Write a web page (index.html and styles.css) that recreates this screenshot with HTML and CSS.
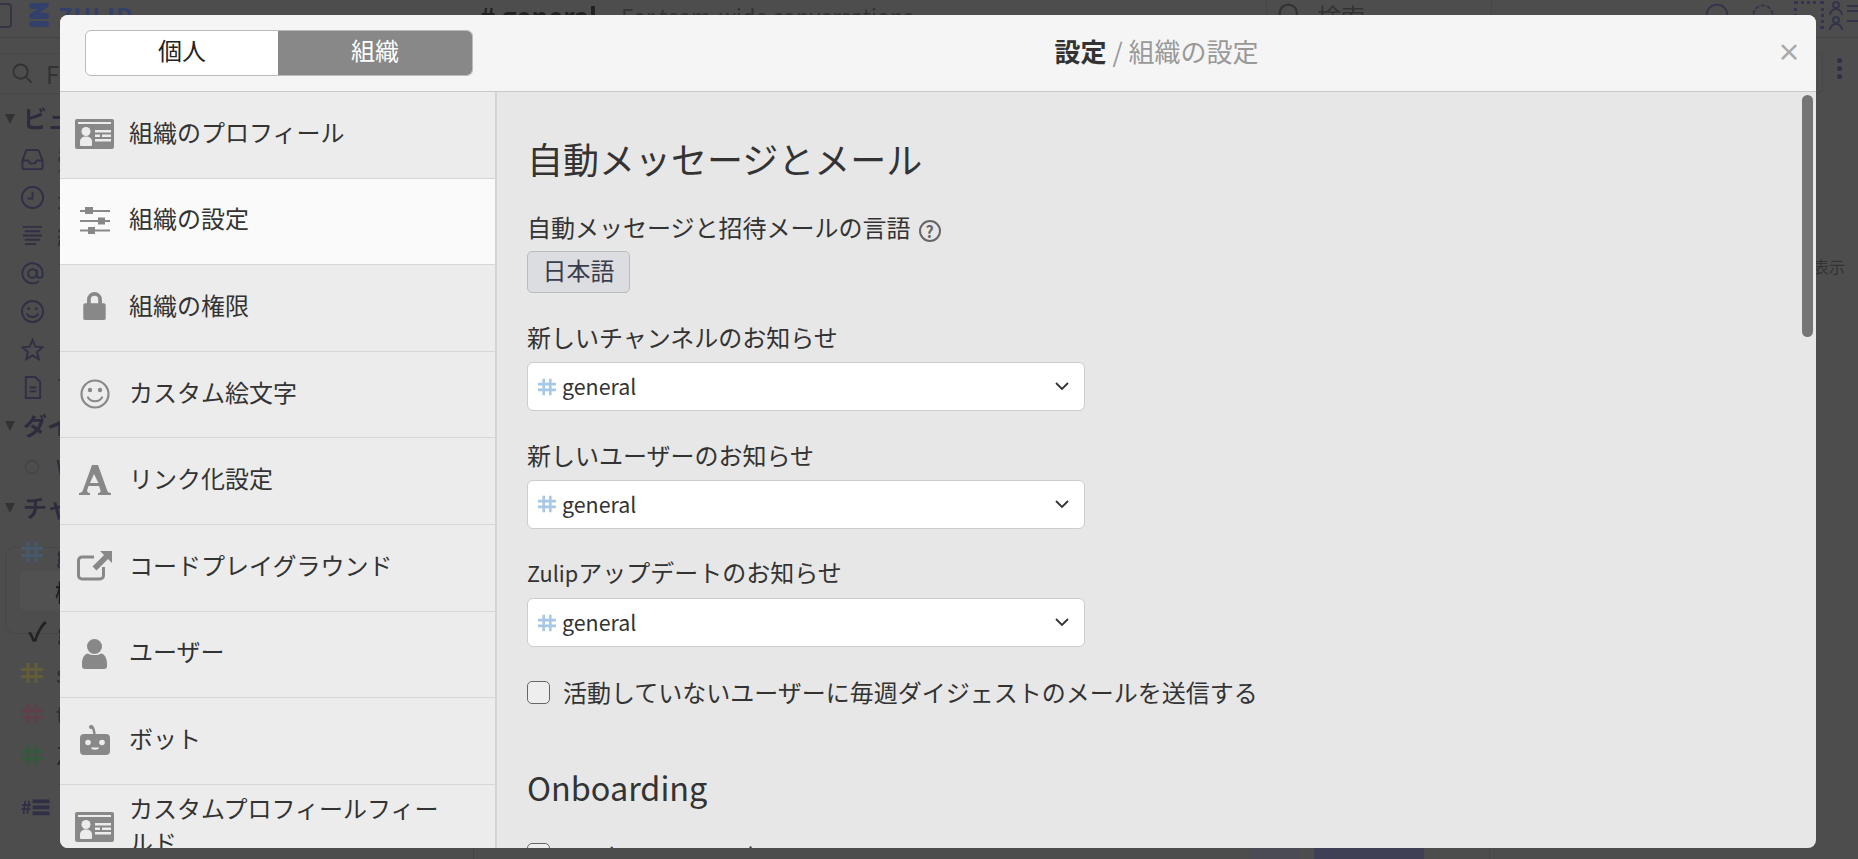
FILE: index.html
```html
<!DOCTYPE html>
<html lang="ja">
<head>
<meta charset="utf-8">
<title>設定 / 組織の設定</title>
<link rel="stylesheet" href="styles.css">
</head>
<body>
<svg class="defs" width="0" height="0" aria-hidden="true">
  <symbol id="i-card" viewBox="0 0 39 30">
    <path fill="#888" d="M2 0h35a2 2 0 0 1 2 2v26a2 2 0 0 1-2 2H2a2 2 0 0 1-2-2V2a2 2 0 0 1 2-2z"/>
    <path fill="#ececec" d="M3 3h33v2H3zM20 11h16v2.500H20zM27 15.500h9V18h-9zM20 15.500h5V18h-5zM20 20h16v2.500H20z"/>
    <circle fill="#ececec" cx="11" cy="12.500" r="4.500"/>
    <path fill="#ececec" d="M5 26v-3.500c0-3 2.500-5 6-5s6 2 6 5V26a1 1 0 0 1-1 1H6a1 1 0 0 1-1-1z"/>
  </symbol>
  <symbol id="i-hash" viewBox="0 0 22 22">
    <path fill="none" stroke="currentColor" stroke-width="3.200" d="M7 1v20M15 1v20M0 7.500h22M0 14.500h22"/>
  </symbol>
</svg>

<div class="app">
  <header class="nav">
    <div class="nav-left">
      <span class="collapse-box"></span>
      <svg class="zlogo" viewBox="0 0 20 24"><path fill="#33406b" d="M3 0h15a2 2 0 0 1 1.500 3.300L11 10h6a3 3 0 0 1 0 6H3a3 3 0 0 1-1.500-5.400L9 6H3a3 3 0 0 1 0-6zM3 18h14a3 3 0 0 1 0 6H3a3 3 0 0 1 0-6z"/></svg>
      <span class="zword">ZULIP</span>
    </div>
    <div class="nav-mid">
      <b class="nav-chan"># general</b>
      <span class="nav-desc">For team-wide conversations</span>
    </div>
    <div class="nav-search">
      <svg class="nav-ico" viewBox="0 0 30 30"><circle cx="13" cy="13" r="10" fill="none" stroke="#333" stroke-width="2.500"/></svg>
      <span>検索</span>
    </div>
    <div class="nav-right">
      <svg class="nav-ico" viewBox="0 0 30 30"><circle cx="15" cy="15" r="12" fill="none" stroke="#33334a" stroke-width="2"/></svg>
      <svg class="nav-ico" viewBox="0 0 30 30"><circle cx="15" cy="15" r="11" fill="none" stroke="#33334a" stroke-width="2" stroke-dasharray="5 2"/></svg>
      <span class="avatar"></span>
      <svg class="nav-ico users" viewBox="0 0 30 30"><g fill="none" stroke="#33334a" stroke-width="2"><circle cx="7" cy="5" r="3"/><circle cx="7" cy="20" r="3"/><path d="M1 15a6 6 0 0 1 12 0M1 30a6 6 0 0 1 12 0M18 6h12M18 11h12M18 21h12"/></g></svg>
    </div>
  </header>

  <div class="below">
    <aside class="left">
      <div class="filter">
        <svg class="filter-ico" viewBox="0 0 22 22"><g fill="none" stroke="#333" stroke-width="2"><circle cx="9" cy="9" r="7.500"/><path d="M14.500 14.500L20.500 20.500"/></g></svg>
        <span>Filter</span>
      </div>
      <div class="head"><span class="tri"></span>ビュー</div>
      <div class="li"><svg class="li-ico" viewBox="0 0 24 24"><path fill="none" stroke="#2f2f45" stroke-width="2" d="M1.500 13v7a2 2 0 0 0 2 2h17a2 2 0 0 0 2-2v-7l-4-10a2 2 0 0 0-2-1H7a2 2 0 0 0-1.800 1zM1.500 13h6l2 3h5l2-3h6"/></svg>受信箱</div>
      <div class="li"><svg class="li-ico" viewBox="0 0 24 24"><path fill="none" stroke="#2f2f45" stroke-width="2" d="M12 1a11 11 0 1 0 .01 0zM12 6v7H7"/></svg>最近の会話</div>
      <div class="li"><svg class="li-ico" viewBox="0 0 24 24"><path fill="none" stroke="#2f2f45" stroke-width="2" d="M2 3h20M4 7.500h16M2 12h20M4 16.500h16M4 21h12"/></svg>結合フィード</div>
      <div class="li"><svg class="li-ico" viewBox="0 0 24 24"><g fill="none" stroke="#2f2f45" stroke-width="2"><circle cx="12" cy="12" r="4.500"/><path d="M16.500 8v5.500a3 3 0 0 0 6 0V12a10.500 10.500 0 1 0-4 8"/></g></svg>メンション</div>
      <div class="li"><svg class="li-ico" viewBox="0 0 24 24"><g fill="none" stroke="#2f2f45" stroke-width="2"><circle cx="12" cy="12" r="11"/><path d="M6 14c2 5 10 5 12 0"/></g><circle cx="8" cy="9" r="1.500" fill="#2f2f45"/><circle cx="16" cy="9" r="1.500" fill="#2f2f45"/></svg>リアクション</div>
      <div class="li"><svg class="li-ico" viewBox="0 0 24 24"><path fill="none" stroke="#2f2f45" stroke-width="2" d="M12 2l3 7 7.500.7-5.700 5 1.700 7.300-6.500-3.900L5.500 22l1.700-7.300-5.700-5L9 9z"/></svg>スター付き</div>
      <div class="li"><svg class="li-ico" viewBox="0 0 24 24"><path fill="none" stroke="#2f2f45" stroke-width="2" d="M5 1h10l5 5v17H5zM9 12h7M9 16h7"/></svg>下書き</div>
      <div class="head head-dm"><span class="tri"></span>ダイレクト</div>
      <div class="li"><span class="ring"></span>Welcome Bot</div>
      <div class="head head-ch"><span class="tri"></span>チャンネル</div>
      <div class="li li-first"><svg class="hash h-blue"><use href="#i-hash"/></svg>general</div>
      <div class="thread">
        <div class="topic">桁</div>
        <div class="li li-check"><span class="check">✓</span>greetings</div>
      </div>
      <div class="li li-tall li-after"><svg class="hash h-yellow"><use href="#i-hash"/></svg>sandbox</div>
      <div class="li li-tall"><svg class="hash h-red"><use href="#i-hash"/></svg>test</div>
      <div class="li li-tall"><svg class="hash h-green"><use href="#i-hash"/></svg>Zulip</div>
      <div class="li li-all"><span class="allch">#☰</span>はチャンネル</div>
    </aside>
    <main class="center">
      <div class="btm-bar">
        <span class="btm-a"></span>
        <span class="btm-b"></span>
      </div>
    </main>
    <aside class="right">
      <div class="right-box"><span class="dots"><i></i><i></i><i></i></span></div>
      <div class="show">表示</div>
    </aside>
  </div>
</div>

<div class="modal">
  <div class="modal-head">
    <div class="head-side">
      <div class="toggle">
        <span class="tog-item">個人</span>
        <span class="tog-item tog-on">組織</span>
      </div>
    </div>
    <div class="modal-title"><b>設定</b> <span class="crumb">/ 組織の設定</span></div>
    <span class="close">×</span>
  </div>
  <div class="modal-body">
    <nav class="side">
      <div class="row"><svg class="ico"><use href="#i-card"/></svg><span>組織のプロフィール</span></div>
      <div class="row row-on"><svg class="ico ico-s" viewBox="0 0 30 28"><path fill="#888" d="M0 3h30v2H0zM0 13h30v2H0zM0 22.500h30v2H0z"/><path fill="#888" d="M5 0h8v7H5zM18 10.500h7v7h-7zM8 20h7v7H8z"/></svg><span>組織の設定</span></div>
      <div class="row"><svg class="ico ico-lock" viewBox="0 0 24 30"><path fill="none" stroke="#888" stroke-width="4" d="M6 14V8a6 6 0 0 1 12 0v6"/><rect y="12" width="24" height="18" rx="2" fill="#888"/></svg><span>組織の権限</span></div>
      <div class="row"><svg class="ico ico-s" viewBox="0 0 30 30"><g fill="none" stroke="#888" stroke-width="2.200"><circle cx="15" cy="15" r="13.500"/><path d="M8 18.500c3 5 11 5 14 0" stroke-linecap="round"/></g><circle cx="10" cy="11" r="2.200" fill="#888"/><circle cx="20" cy="11" r="2.200" fill="#888"/></svg><span>カスタム絵文字</span></div>
      <div class="row"><svg class="ico ico-s ico-a" viewBox="0 0 32 30"><path fill="#888" d="M13 0h6l9 25c.5 2 1.500 2.800 4 3v2H19v-2c2 0 3-1 2.500-2.500L20 21H9.500l-1.300 4c-.5 1.500.5 2.800 2.800 3v2H0v-2c2.500-.3 3.500-1.300 4-3zM15 9l-4 9h8.500z"/></svg><span>リンク化設定</span></div>
      <div class="row"><svg class="ico ico-x" viewBox="0 0 35 30"><path fill="none" stroke="#888" stroke-width="3" d="M17 6H5a3.500 3.500 0 0 0-3.500 3.500v15A3.500 3.500 0 0 0 5 28h18a3.500 3.500 0 0 0 3.500-3.500V16"/><path fill="#888" d="M23 0h12v12l-4-4-11.500 11.500-4-4L27 4z"/></svg><span>コードプレイグラウンド</span></div>
      <div class="row"><svg class="ico ico-u" viewBox="0 0 25 30"><circle cx="12.500" cy="7.500" r="7.500" fill="#888"/><path fill="#888" d="M0 25c0-7 3-10 6-10.500 3 2 10 2 13 0 3 .5 6 3.500 6 10.500v2a3 3 0 0 1-3 3H3a3 3 0 0 1-3-3z"/></svg><span>ユーザー</span></div>
      <div class="row"><svg class="ico ico-s" viewBox="0 0 30 30"><path fill="none" stroke="#888" stroke-width="2.500" d="M10.500 1c2.500 0 3.500 4 4 8"/><circle cx="11" cy="2" r="2" fill="#888"/><rect y="9" width="30" height="21" rx="4" fill="#888"/><circle cx="8" cy="17.500" r="2.800" fill="#ececec"/><circle cx="22" cy="17.500" r="2.800" fill="#ececec"/><path fill="#ececec" d="M11 22.500h8c0 3-8 3-8 0z"/></svg><span>ボット</span></div>
      <div class="row row-wrap"><svg class="ico"><use href="#i-card"/></svg><span class="wrap">カスタムプロフィールフィールド</span></div>
    </nav>
    <section class="content">
      <span class="thumb"></span>
      <h3 class="h">自動メッセージとメール</h3>
      <label class="lab lab-first">自動メッセージと招待メールの言語<span class="help">?</span></label>
      <button class="lang">日本語</button>
      <label class="lab lab-second">新しいチャンネルのお知らせ</label>
      <div class="sel"><svg class="hash-s"><use href="#i-hash"/></svg><span class="sel-t">general</span><svg class="chev" viewBox="0 0 14 9"><path fill="none" stroke="#333" stroke-width="1.800" d="M1 1l6 6 6-6"/></svg></div>
      <label class="lab">新しいユーザーのお知らせ</label>
      <div class="sel"><svg class="hash-s"><use href="#i-hash"/></svg><span class="sel-t">general</span><svg class="chev" viewBox="0 0 14 9"><path fill="none" stroke="#333" stroke-width="1.800" d="M1 1l6 6 6-6"/></svg></div>
      <label class="lab"><span class="lat">Zulip</span>アップデートのお知らせ</label>
      <div class="sel"><svg class="hash-s"><use href="#i-hash"/></svg><span class="sel-t">general</span><svg class="chev" viewBox="0 0 14 9"><path fill="none" stroke="#333" stroke-width="1.800" d="M1 1l6 6 6-6"/></svg></div>
      <div class="chk chk-first"><span class="box"></span>活動していないユーザーに毎週ダイジェストのメールを送信する</div>
      <h3 class="h h-second">Onboarding</h3>
      <div class="chk chk-second"><span class="box"></span><span class="lat">Send a custom Welcome Bot message to new users</span></div>
    </section>
  </div>
</div>
</body>
</html>
```

FILE: styles.css
```css
* { box-sizing: border-box; }
html, body { margin: 0; height: 100%; overflow: hidden; }
body {
  background: #4d4d4d;
  font-family: "Noto Sans CJK JP", "Noto Sans", sans-serif;
  font-size: 24px;
  color: #333;
}
.defs { display: block; height: 0; }

/* dimmed application behind the modal */
.app {
  height: 859px;
  width: 1858px;
  display: flex;
  flex-direction: column;
  color: #2a2a3a;
  filter: blur(0.6px);
  overflow: hidden;
}
.nav {
  height: 38px;
  flex: none;
  display: flex;
  align-items: center;
  padding-bottom: 7px;
  border-bottom: 1px solid #444;
}
.nav-left { width: 474px; display: flex; align-items: center; flex: none; }
.collapse-box { width: 30px; height: 25px; margin-left: -18px; border: 2px solid #3a3346; border-radius: 4px; flex: none; }
.zlogo { width: 20px; height: 24px; margin-left: 17px; flex: none; }
.zword { margin-left: 9px; font-weight: 700; color: #33406b; letter-spacing: 1px; }
.nav-mid { width: 793px; flex: none; display: flex; align-items: center; gap: 24px; padding-left: 6px; border-right: 1px solid #474747; height: 37px; }
.nav-chan { font-size: 26px; color: #222; }
.nav-desc { color: #333; font-size: 21.7px; }
.nav-search { width: 225px; flex: none; display: flex; align-items: center; gap: 14px; padding-left: 10px; border-right: 1px solid #474747; height: 37px; color: #333; }
.nav-ico { width: 26px; height: 26px; flex: none; }
.nav-right { display: flex; align-items: center; gap: 20px; padding-left: 212px; flex: none; }
.avatar { width: 30px; height: 28px; border: 3px dotted #33334f; flex: none; margin-left: -2px; }
.users { width: 30px; height: 30px; margin-left: -15px; }

.below { flex: 1; display: flex; min-height: 0; }
.left { width: 474px; flex: none; border-right: 1px solid #444; padding-top: 15px; }
.filter {
  height: 41px;
  margin: 0 40px 5px -6px;
  border: 1px solid #474747;
  border-radius: 6px;
  display: flex;
  align-items: center;
  gap: 13px;
  padding-left: 17px;
  color: #333;
}
.filter-ico { width: 21px; height: 21px; flex: none; }
.head { height: 40px; margin-bottom: 1px; padding: 0 0 4px 5px; display: flex; align-items: center; font-weight: 700; color: #2c2c3c; }
.head-dm { margin-bottom: 2px; }
.head-ch { margin-top: 2px; }
.tri { width: 0; height: 0; border-left: 5px solid transparent; border-right: 5px solid transparent; border-top: 10px solid #333; margin: 4px 8px 0 0; flex: none; }
.li { height: 38px; display: flex; align-items: center; padding-left: 21px; gap: 13px; color: #2c2c3c; white-space: nowrap; }
.li-ico { width: 23px; height: 23px; flex: none; }
.ring { width: 14px; height: 14px; margin: 0 4px; border: 1px solid #3e3e3e; border-radius: 50%; flex: none; }
.hash { width: 22px; height: 22px; flex: none; }
.h-blue { color: #47586a; }
.h-yellow { color: #625c3b; }
.h-red { color: #5e4049; }
.h-green { color: #36583f; }
.li-first { margin-top: 5px; }
.thread { border: 1px solid #474747; border-right: 0; border-radius: 10px 0 0 10px; margin-left: 5px; height: 87px; margin-top: -24px; padding-top: 23px; }
.topic { margin-left: 14px; height: 40px; background: #515151; border-radius: 6px; padding-left: 35px; display: flex; align-items: center; color: #1c1c1c; font-weight: 500; }
.li-check { padding-left: 22px; gap: 9px; height: 36px; }
.check { font-size: 26px; color: #222; width: 20px; font-weight: 700; }
.li-tall { height: 41px; }
.li-after { margin-top: 18px; }
.li-all { margin-top: 11px; height: 40px; gap: 10px; }
.allch { font-weight: 700; font-size: 18px; color: #2f2f45; }
.center { flex: 1; display: flex; align-items: flex-end; border-right: 1px solid #474747; }
.btm-bar { height: 11px; width: 100%; display: flex; }
.btm-a { width: 50px; margin-left: 775px; background: #4b4b55; }
.btm-b { width: 110px; margin-left: 15px; background: #3f3f55; }
.right { width: 368px; flex: none; padding-top: 15px; display: flex; flex-direction: column; }
.right-box { height: 41px; margin-left: -40px; width: 373px; border: 1px solid #474747; border-left: 0; border-radius: 6px; position: relative; }
.dots { position: absolute; right: -20px; top: 4px; display: flex; flex-direction: column; gap: 3px; }
.dots i { width: 5px; height: 5px; border-radius: 50%; background: #2f2f45; display: block; }
.show { margin-top: 160px; width: 355px; text-align: right; white-space: nowrap; font-size: 16px; line-height: 24px; color: #333; }

/* modal */
.modal {
  position: absolute;
  left: 60px;
  top: 15px;
  width: 1756px;
  height: 833px;
  border-radius: 8px;
  overflow: hidden;
  display: flex;
  flex-direction: column;
  background: #e7e7e7;
}
.modal-head {
  height: 77px;
  flex: none;
  display: flex;
  align-items: center;
  background: #f5f5f5;
  border-bottom: 1px solid #c8c8c8;
  position: relative;
}
.head-side { width: 437px; flex: none; padding-left: 25px; }
.toggle { display: flex; width: 388px; height: 46px; border: 1px solid #bbb; border-radius: 6px; overflow: hidden; background: #fff; }
.tog-item { flex: 1; display: flex; align-items: center; justify-content: center; color: #222; padding-bottom: 7px; }
.tog-item:first-child { flex: 0 0 192px; }
.tog-on { background: #888; color: #fff; }
.modal-title { flex: 1; text-align: center; font-size: 26px; color: #333; padding-bottom: 5px; }
.modal-title b { font-weight: 700; }
.crumb { color: #999; }
.close { position: absolute; right: 15px; top: 10px; font-size: 24px; line-height: 52px; font-weight: 700; color: #aaa; }

.modal-body { flex: 1; display: flex; min-height: 0; }
.side { width: 437px; flex: none; background: #ececec; border-right: 2px solid #d4d4d4; overflow: hidden; }
.row {
  height: 86.6px;
  display: flex;
  align-items: center;
  border-bottom: 1px solid #d6d6d6;
  color: #333;
  padding-left: 69px;
  position: relative;
}
.row > span { margin-bottom: 7px; }
.row-on { background: #fafafa; }
.ico { position: absolute; left: 15px; top: 27px; width: 39px; height: 30px; }
.ico-s { left: 20px; width: 30px; height: 30px; }
.ico-a { left: 19px; width: 32px; }
.ico-lock { left: 23px; width: 23px; height: 28px; }
.ico-x { left: 17px; top: 26px; width: 35px; height: 30px; }
.ico-u { left: 22px; top: 27px; width: 25px; height: 30px; }
.row-wrap { height: 90px; align-items: flex-start; padding-top: 6px; }
.wrap { width: 330px; line-height: 34px; display: block; }

.content { flex: 1; position: relative; padding: 42px 0 0 30px; overflow: hidden; color: #333; }
.thumb { position: absolute; right: 3px; top: 3px; width: 11px; height: 242px; border-radius: 6px; background: #757575; }
.h { margin: 0; font-size: 36px; font-weight: 400; line-height: 48px; color: #333; }
.h-second { font-size: 32.4px; margin-top: 55px; padding-bottom: 0; line-height: 48px; }
.lab { display: block; line-height: 32px; margin-top: 27.5px; }
.lab-first { margin-top: 29px; }
.lab-second { margin-top: 28px; }
.lat { font-size: 21.7px; }
.help { display: inline-flex; width: 22px; height: 22px; margin-left: 8px; border: 2px solid #666; border-radius: 50%; font-size: 16px; line-height: 1; color: #666; align-items: center; justify-content: center; font-weight: 700; vertical-align: -1px; }
.lang {
  display: block;
  margin-top: 8px;
  width: 103px;
  height: 42px;
  padding: 0 0 5px;
  background: #dcdde0;
  border: 1px solid #b9bbc0;
  border-radius: 5px;
  font: inherit;
  color: #3a3d4d;
}
.sel {
  margin-top: 9px;
  width: 558px;
  height: 49px;
  display: flex;
  align-items: center;
  background: #fff;
  border: 1px solid #ccc;
  border-radius: 6px;
  padding-left: 10px;
}
.hash-s { width: 18px; height: 18px; color: #a6c7e5; flex: none; }
.sel-t { margin-left: 6px; flex: 1; color: #333; font-size: 21.4px; padding-bottom: 2px; }
.chev { width: 14px; height: 9px; margin-right: 15px; flex: none; }
.chk { display: flex; align-items: center; gap: 13px; line-height: 32px; white-space: nowrap; }
.chk-first { margin-top: 29px; }
.chk-second { margin-top: 27.5px; }
.box { width: 23px; height: 23px; border: 1px solid #666; border-radius: 5px; background: #eee; flex: none; }
```
